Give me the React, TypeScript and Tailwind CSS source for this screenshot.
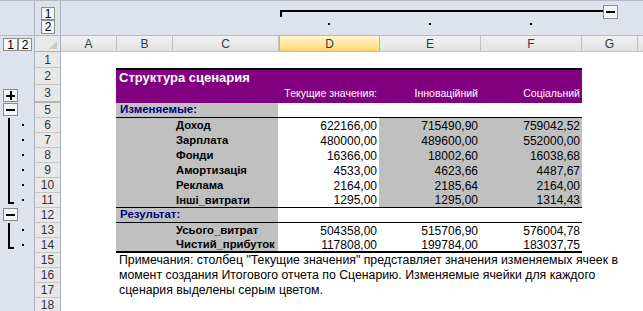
import type { ReactNode } from "react";

type BandKind = "plus" | "minus" | "line" | "end" | undefined;

const HEAD_COLS = [
  { k: "A", w: "w-[56px]", on: false },
  { k: "B", w: "w-[56px]", on: false },
  { k: "C", w: "w-[106px]", on: false },
  { k: "D", w: "w-[101px]", on: true },
  { k: "E", w: "w-[101px]", on: false },
  { k: "F", w: "w-[101px]", on: false },
  { k: "G", w: "w-[56px]", on: false },
];

const CHANGING = [
  { n: 6, label: "Доход", d: "622166,00", e: "715490,90", f: "759042,52" },
  { n: 7, label: "Зарплата", d: "480000,00", e: "489600,00", f: "552000,00" },
  { n: 8, label: "Фонди", d: "16366,00", e: "18002,60", f: "16038,68" },
  { n: 9, label: "Амортизація", d: "4533,00", e: "4623,66", f: "4487,67" },
  { n: 10, label: "Реклама", d: "2164,00", e: "2185,64", f: "2164,00" },
  { n: 11, label: "Інші_витрати", d: "1295,00", e: "1295,00", f: "1314,43" },
];

const RESULTS = [
  { n: 13, label: "Усього_витрат", d: "504358,00", e: "515706,90", f: "576004,78" },
  { n: 14, label: "Чистий_прибуток", d: "117808,00", e: "199784,00", f: "183037,75" },
];

const NOTES = [
  'Примечания: столбец "Текущие значения" представляет значения изменяемых ячеек в',
  "момент создания Итогового отчета по Сценарию. Изменяемые ячейки для каждого",
  "сценария выделены серым цветом.",
];

function OutlineButton({ className, children }: { className: string; children?: ReactNode }) {
  return (
    <div
      className={`absolute flex items-center justify-center border border-[#8d8d8d] bg-[#f5f6f8] text-[12px] leading-none text-black ${className}`}
    >
      {children}
    </div>
  );
}

function MinusMark() {
  return <div className="h-[2px] w-[9px] bg-black" />;
}

function PlusMark() {
  return (
    <div className="relative h-[9px] w-[9px]">
      <div className="absolute left-0 top-[4px] h-[2px] w-[9px] bg-black" />
      <div className="absolute left-[4px] top-0 h-[9px] w-[2px] bg-black" />
    </div>
  );
}

function Band({ kind }: { kind?: BandKind }) {
  return (
    <div className="relative w-[34px] shrink-0 bg-[#dde2eb]">
      {kind === "plus" && (
        <OutlineButton className="left-[3px] top-[4px] h-[13px] w-[15px]">
          <PlusMark />
        </OutlineButton>
      )}
      {kind === "minus" && (
        <OutlineButton className="left-[3px] top-0 h-[13px] w-[15px]">
          <MinusMark />
        </OutlineButton>
      )}
      {kind === "line" && <div className="absolute left-[8px] top-0 bottom-0 w-[2px] bg-black" />}
      {kind === "end" && (
        <>
          <div className="absolute left-[8px] top-0 h-[11px] w-[2px] bg-black" />
          <div className="absolute left-[8px] top-[9px] h-[2px] w-[6px] bg-black" />
        </>
      )}
      {(kind === "line" || kind === "end") && (
        <div className="absolute left-[22px] top-[6px] h-[2px] w-[2px] bg-black" />
      )}
    </div>
  );
}

function Row({
  n,
  h,
  band,
  thick = false,
  children,
}: {
  n: number;
  h: string;
  band?: BandKind;
  thick?: boolean;
  children?: ReactNode;
}) {
  return (
    <div className={`flex ${h}`}>
      <Band kind={band} />
      <div
        className={`flex w-[27px] shrink-0 items-center justify-center border-x border-[#a9b1bf] bg-[#e8e8e8] text-[12px] text-[#2c3442] ${
          thick ? "border-b-2 border-b-[#b4b4b4]" : "border-b border-b-[#c6c6c6]"
        }`}
      >
        {n}
      </div>
      <div className="w-[55px] shrink-0" />
      {children}
      <div className="flex-1" />
    </div>
  );
}

function Num({ v, gray, line }: { v: string; gray?: boolean; line?: string }) {
  return (
    <div
      className={`flex items-center justify-end pr-[2px] text-[12px] text-black ${gray ? "bg-[#c0c0c0]" : "bg-white"} ${
        line ?? ""
      } w-[101px] shrink-0 last:w-[102px]`}
    >
      {v}
    </div>
  );
}

function LabelCells({ label, line }: { label: string; line?: string }) {
  return (
    <>
      <div className={`w-[56px] shrink-0 bg-[#c0c0c0] ${line ?? ""}`} />
      <div
        className={`flex w-[106px] shrink-0 items-center bg-[#c0c0c0] pl-[4px] text-[11.3px] font-bold whitespace-nowrap text-black ${
          line ?? ""
        }`}
      >
        {label}
      </div>
    </>
  );
}

function SectionRow({ n, band, title }: { n: number; band: BandKind; title: string }) {
  return (
    <Row n={n} h="h-[15px]" band={band}>
      <div className="flex w-[466px] shrink-0 border-b border-black">
        <div className="flex w-[162px] shrink-0 items-center bg-[#c0c0c0] pl-[4px] text-[11.5px] font-bold text-[#000080]">
          {title}
        </div>
        <div className="flex-1 bg-white" />
      </div>
    </Row>
  );
}

export default function App() {
  return (
    <div className="h-[311px] w-[643px] overflow-hidden bg-white font-['Liberation_Sans',Arial,sans-serif]">
      {/* column outline band */}
      <div className="flex h-[36px] border-t border-b border-[#b4bac6] bg-[#dde2eb]">
        <div className="w-[34px] shrink-0" />
        <div className="relative w-[27px] shrink-0 border-x border-[#a9b1bf]">
          <OutlineButton className="left-[6px] top-[6px] h-[13px] w-[14px]">1</OutlineButton>
          <OutlineButton className="left-[6px] top-[19px] h-[14px] w-[14px]">2</OutlineButton>
        </div>
        <div className="relative flex-1">
          <div className="absolute left-[219px] top-[9px] h-[2px] w-[324px] bg-black" />
          <div className="absolute left-[219px] top-[9px] h-[7px] w-[2px] bg-black" />
          <OutlineButton className="left-[542px] top-[4px] h-[14px] w-[15px]">
            <MinusMark />
          </OutlineButton>
          <div className="absolute left-[267px] top-[22px] h-[2px] w-[2px] bg-black" />
          <div className="absolute left-[368px] top-[22px] h-[2px] w-[2px] bg-black" />
          <div className="absolute left-[469px] top-[22px] h-[2px] w-[2px] bg-black" />
        </div>
      </div>

      {/* column headers */}
      <div className="flex h-[16px]">
        <div className="relative w-[34px] shrink-0 bg-[#dde2eb]">
          <OutlineButton className="left-[3px] top-[2px] h-[13px] w-[15px]">1</OutlineButton>
          <OutlineButton className="left-[18px] top-[2px] h-[13px] w-[14px]">2</OutlineButton>
        </div>
        <div className="relative w-[27px] shrink-0 border-x border-b border-[#a9b1bf] bg-[#e8e8e8]">
          <svg className="absolute right-[3px] bottom-[2px]" width="8" height="8" viewBox="0 0 8 8">
            <polygon points="8,0 8,8 0,8" fill="#c9c9c9" />
          </svg>
        </div>
        {HEAD_COLS.map((c) => (
          <div
            key={c.k}
            className={`flex ${c.w} shrink-0 items-center justify-center text-[12px] ${
              c.on
                ? "border-x border-b border-[#e3b544] bg-gradient-to-b from-[#fff6d2] to-[#ffd66b] text-[#3a3a3a]"
                : "border-r border-b border-[#c2c2c2] bg-gradient-to-b from-[#f1f1f1] to-[#e2e2e2] text-[#333a48]"
            }`}
          >
            {c.k}
          </div>
        ))}
        <div className="flex-1 border-b border-[#c2c2c2] bg-gradient-to-b from-[#f1f1f1] to-[#e2e2e2]" />
      </div>

      <Row n={1} h="h-[16px]" />
      <Row n={2} h="h-[17px]">
        <div className="flex w-[466px] shrink-0 items-center border-t-2 border-black bg-[#800080] pl-[3px] text-[13px] font-bold text-white">
          Структура сценария
        </div>
      </Row>
      <Row n={3} h="h-[18px]" band="plus" thick>
        <div className="flex w-[466px] shrink-0 items-center bg-[#800080] text-[10.5px] text-white">
          <div className="w-[162px] shrink-0" />
          <div className="w-[101px] shrink-0 pr-[2px] text-right">Текущие значения:</div>
          <div className="w-[101px] shrink-0 pr-[2px] text-right">Інноваційний</div>
          <div className="w-[102px] shrink-0 pr-[2px] text-right">Соціальний</div>
        </div>
      </Row>

      <SectionRow n={5} band="minus" title="Изменяемые:" />
      {CHANGING.map((r) => {
        const line = r.n === 11 ? "border-b border-black" : "";
        return (
          <Row key={r.n} n={r.n} h="h-[15px]" band={r.n === 11 ? "end" : "line"}>
            <LabelCells label={r.label} line={line} />
            <div className="flex">
              <Num v={r.d} line={line} />
              <Num v={r.e} gray line={line} />
              <Num v={r.f} gray line={line} />
            </div>
          </Row>
        );
      })}

      <SectionRow n={12} band="minus" title="Результат:" />
      {RESULTS.map((r) => {
        const line = r.n === 14 ? "border-b-2 border-black" : "";
        return (
          <Row key={r.n} n={r.n} h="h-[15px]" band={r.n === 14 ? "end" : "line"}>
            <LabelCells label={r.label} line={line} />
            <div className="flex">
              <Num v={r.d} line={line} />
              <Num v={r.e} line={line} />
              <Num v={r.f} line={line} />
            </div>
          </Row>
        );
      })}

      {NOTES.map((t, i) => (
        <Row key={t} n={15 + i} h="h-[15px]">
          <div className="relative z-10 flex w-0 items-center pl-[3px] text-[12.3px] whitespace-nowrap text-black">
            {t}
          </div>
        </Row>
      ))}
      <Row n={18} h="h-[15px]" />
    </div>
  );
}
